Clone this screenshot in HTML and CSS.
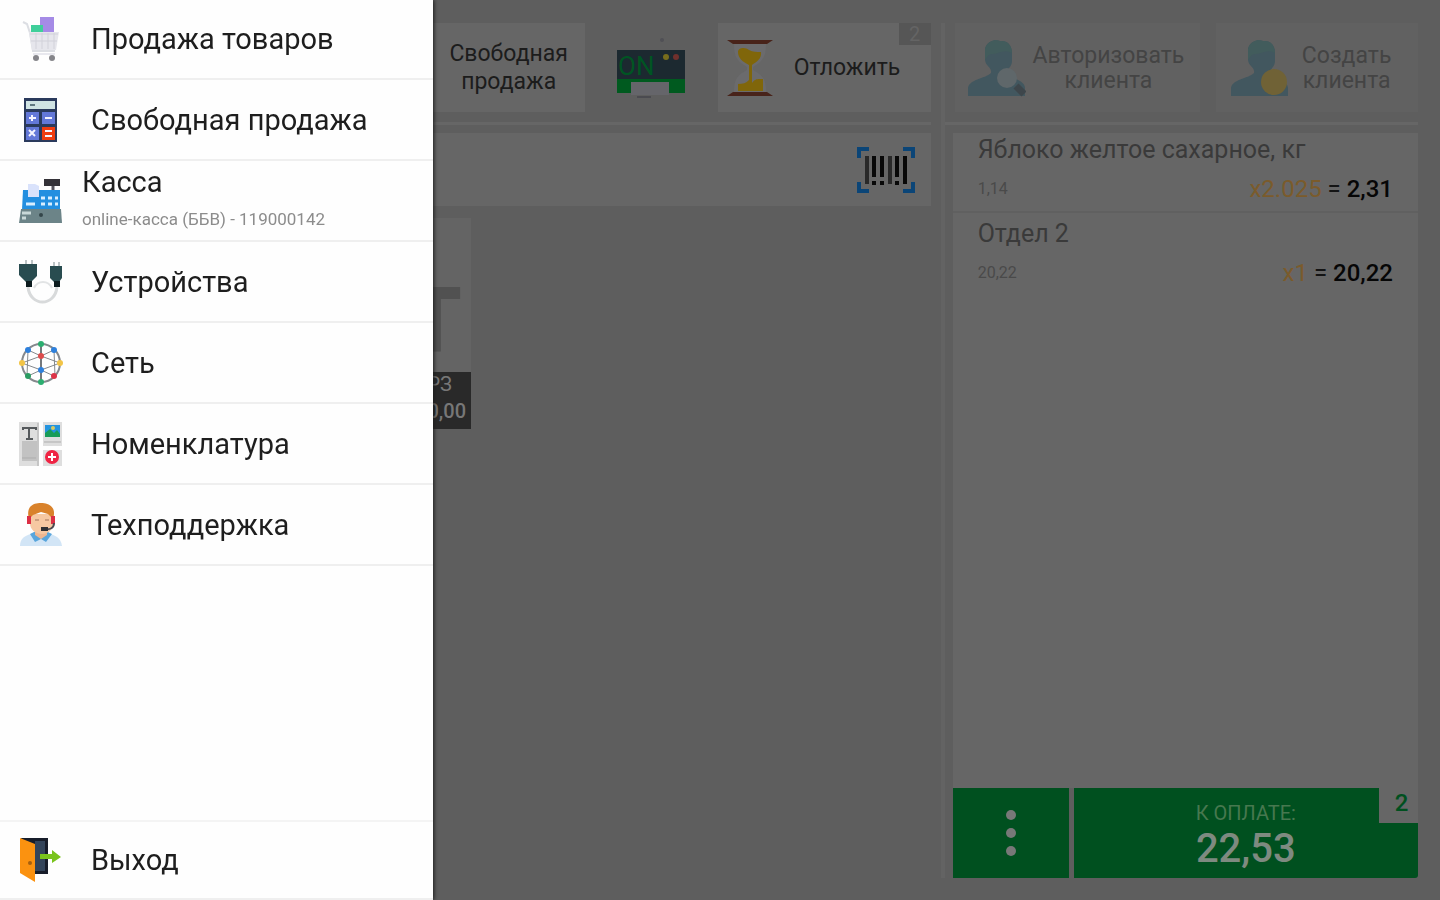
FILE: index.html
```html
<!DOCTYPE html>
<html lang="ru">
<head>
<meta charset="utf-8">
<title>Касса</title>
<link rel="stylesheet" href="styles.css">
</head>
<body>
<main class="app">
  <section class="sale">
    <div class="toolbar">
      <button class="tool tool-free">Свободная<br>продажа</button>
      <button class="tool-printer" aria-label="Принтер">
        <svg width="70" height="62" viewBox="0 0 70 62">
          <circle cx="46" cy="3" r="2" fill="#505055"/>
          <path d="M1 13h68v30H1z" fill="#1c2930"/>
          <path d="M1 42h68v14H1z" fill="#005a1f"/>
          <path d="M15 45h38v13H15z" fill="#65656a"/>
          <path d="M21 60h14" stroke="#4b4b50" stroke-width="2"/>
          <circle cx="50" cy="20" r="3" fill="#776d1c"/><circle cx="60" cy="20" r="3" fill="#70302c"/>
          <text x="2" y="38" class="printer-on">ON</text>
        </svg>
      </button>
      <button class="tool tool-hold">
        <svg width="48" height="58" viewBox="0 0 48 58">
          <path d="M8 5h32c0 13-3 17-13 23v3c10 5 13 10 13 22H8c0-12 3-17 13-22v-3C11 22 8 18 8 5z" fill="#6b6b6d"/>
          <path d="M12 13c0-5 8-5 11-2 4 2 8 2 12 2 1 7-5 10-9 13v18c3-5 7-4 11-4v12H12v-7c5 0 8-1 11-4V26c-6-3-11-7-11-13z" fill="#80660a"/>
          <path d="M1 1h46l-6 4H7zM7 53h34l6 4H1z" fill="#48231a"/>
        </svg>
        <span>Отложить</span>
        <span class="hold-count">2</span>
      </button>
    </div>
    <div class="search">
      <input class="search-input" type="text" aria-label="Поиск товара">
      <button class="scan" aria-label="Сканировать">
        <svg width="58" height="46" viewBox="0 0 58 46">
          <path d="M2 11V2h10M46 2h10v9M2 35v9h10M46 44h10v-9" fill="none" stroke="#0b4577" stroke-width="4"/>
          <path d="M10 9v28M33 9v28" stroke="#292929" stroke-width="4"/>
          <path d="M17 9v21M25 9v21M40 9v21M17 34v4M25 34v4M40 34v4M48 9v28" stroke="#080808" stroke-width="4"/>
        </svg>
      </button>
    </div>
    <div class="products">
      <button class="product">
        <span class="product-pic">T</span>
        <span class="product-label"><span>РЗ</span><span class="product-price">0,00</span></span>
      </button>
    </div>
  </section>

  <section class="order">
    <div class="clients">
      <button class="client client-wide">
        <svg width="58" height="58" viewBox="0 0 58 58">
          <path d="M17 10C19 2 27 0 32 2c8-1 12 5 12 12v8c0 5-4 8-6 11 1 6 19 7 19 16v8H0v-7c0-10 17-10 23-16 1-6-5-6-6-13z" fill="#42575f"/>
          <path d="M17 10C19 2 27 0 32 2c8-1 12 5 12 12-9-5-15 2-20 1-4 0-5 4-7 6z" fill="#425c5c"/>
          <circle cx="39" cy="39" r="10" fill="#5f676a"/>
          <path d="M48 47l8 8" stroke="#3e464b" stroke-width="7"/>
        </svg>
        <span>Авторизовать<br>клиента</span>
      </button>
      <button class="client client-new">
        <svg width="58" height="58" viewBox="0 0 58 58">
          <path d="M17 10C19 2 27 0 32 2c8-1 12 5 12 12v8c0 5-4 8-6 11 1 6 19 7 19 16v8H0v-7c0-10 17-10 23-16 1-6-5-6-6-13z" fill="#42575f"/>
          <path d="M17 10C19 2 27 0 32 2c8-1 12 5 12 12-9-5-15 2-20 1-4 0-5 4-7 6z" fill="#425c5c"/>
          <circle cx="43" cy="43" r="13" fill="#706236"/>
        </svg>
        <span>Создать<br>клиента</span>
      </button>
    </div>
    <ul class="lines">
      <li class="line">
        <div class="line-name">Яблоко желтое сахарное, кг</div>
        <div class="line-row"><span class="line-price">1,14</span><span class="line-total"><span class="line-qty">x2.025</span> = <b>2,31</b></span></div>
      </li>
      <li class="line">
        <div class="line-name">Отдел 2</div>
        <div class="line-row"><span class="line-price">20,22</span><span class="line-total"><span class="line-qty">x1</span> = <b>20,22</b></span></div>
      </li>
    </ul>
    <div class="actions">
      <button class="more" aria-label="Ещё">
        <svg width="10" height="48" viewBox="0 0 10 48" fill="#787878"><circle cx="5" cy="6" r="5"/><circle cx="5" cy="24" r="5"/><circle cx="5" cy="42" r="5"/></svg>
      </button>
      <button class="pay">
        <span class="pay-caption">К ОПЛАТЕ:</span>
        <span class="pay-sum">22,53</span>
        <span class="pay-count">2</span>
      </button>
    </div>
  </section>
</main>

<nav class="drawer">
  <ul class="menu">
    <li><a class="item" href="#">
      <svg class="icon" viewBox="0 0 44 44">
        <path d="M21 0h14v17H21z" fill="#a58be6"/><path d="M12 8h12v8H12z" fill="#3fcf9a"/>
        <path d="M4 5l4 2 3 9 3 18h22" fill="none" stroke="#dcdee3" stroke-width="2"/>
        <path d="M10 15h30l-3 18H13z" fill="#e6e6ec"/>
        <path d="M11 17h28M12 24h26M17 16v16M23 16v16M29 16v16M35 16v16" stroke="#d2d2da"/>
        <path d="M14 37h22" stroke="#e8e8ee" stroke-width="2"/>
        <circle cx="17" cy="41" r="3" fill="#85858a"/><circle cx="33" cy="41" r="3" fill="#85858a"/>
      </svg>Продажа товаров</a></li>
    <li><a class="item" href="#">
      <svg class="icon" viewBox="0 0 44 44">
        <path d="M5 0h33v44H5z" fill="#2a3a5c"/><path d="M7 3h29v8H7z" fill="#cfe3e3"/><path d="M11 7h5" stroke="#607880" stroke-width="2"/>
        <path d="M7 14h13v12H7zM23 14h13v12H23zM7 29h13v13H7z" fill="#6378d8"/><path d="M23 29h13v13H23z" fill="#f03c10"/>
        <path d="M10 20h7M13 17v6M26 20h7M10 32l6 6M16 32l-6 6M26 33h7M26 38h7" stroke="#f4f4ff" stroke-width="2"/>
      </svg>Свободная продажа</a></li>
    <li><a class="item item-double" href="#">
      <svg class="icon" viewBox="0 0 44 44">
        <path d="M25 0h16v7H25z" fill="#343238"/><path d="M34 7v6" stroke="#55535c" stroke-width="3"/>
        <path d="M4 11h37v20H3z" fill="#238fe0"/><path d="M9 5h7l4 2v11H9z" fill="#d9e2fb"/>
        <path d="M22 19h4M29 19h4M36 19h3M7 25h9M22 25h4M29 25h4M36 25h3" stroke="#d8eeff" stroke-width="3"/>
        <path d="M2 30h40l1 14H0z" fill="#6c8488"/><path d="M3 34h9M3 39h4" stroke="#c8d8d8" stroke-width="3"/><circle cx="22" cy="36" r="2" fill="#34464a"/>
      </svg>
      <span class="item-text">Касса<small>online-касса (ББВ) - 119000142</small></span></a></li>
    <li><a class="item" href="#">
      <svg class="icon" viewBox="0 0 44 44">
        <path d="M9 27c2 20 27 20 29 0" fill="none" stroke="#d8dadb" stroke-width="3"/><path d="M15 28c4-8 14-8 18 0" fill="none" stroke="#e2e4e5" stroke-width="2"/>
        <path d="M7 0v6M13 0v6M35 2v6M40 2v6" stroke="#bcc3c5" stroke-width="2"/>
        <path d="M0 4h18v12l-6 6H7l-7-7zM31 6h12v12l-3 4h-5l-4-4z" fill="#294c50"/><path d="M7 21h6v6H7zM35 21h6v6h-6z" fill="#0c1b1e"/>
      </svg>Устройства</a></li>
    <li><a class="item" href="#">
      <svg class="icon" viewBox="0 0 44 44">
        <circle cx="22" cy="22" r="19" fill="none" stroke="#85898d" stroke-width="2"/>
        <path d="M22 3v38M3 22l19-7 19 7-19 7zM9 9l13 6 13-6M9 35l13-6 13 6M9 9l-1 26M35 9l1 26" fill="none" stroke="#85898d" stroke-width="1"/>
        <path d="M22 3v38" stroke="#74787c" stroke-width="2"/>
        <circle cx="22" cy="3" r="3" fill="#2cae70"/><circle cx="22" cy="41" r="3" fill="#2cae70"/><circle cx="9" cy="35" r="3" fill="#2a9c62"/>
        <circle cx="9" cy="9" r="3" fill="#2e80dc"/><circle cx="35" cy="9" r="3" fill="#2e80dc"/><circle cx="22" cy="29" r="3" fill="#2e80dc"/>
        <circle cx="3" cy="22" r="3" fill="#f2c446"/><circle cx="41" cy="22" r="3" fill="#f2c446"/>
        <circle cx="22" cy="15" r="3" fill="#dd4c4c"/><circle cx="35" cy="35" r="3" fill="#dc3448"/>
      </svg>Сеть</a></li>
    <li><a class="item" href="#">
      <svg class="icon" viewBox="0 0 44 44">
        <path d="M0 0h20v44H0zM24 0h19v24H24zM24 28h19v16H24z" fill="#dedede"/><path d="M3 19h15v20H3z" fill="#c2c2c2"/><path d="M19 1v43M3 36h14M25 20h17" stroke="#adadad"/>
        <path d="M4 8V6h13v2M10 6v11M7 17h7" fill="none" stroke="#55595c" stroke-width="2"/>
        <path d="M26 3h15v12H26z" fill="#2494df"/><path d="M26 15v-4l5-4 4 4 3-3 3 4v3z" fill="#189c58"/><circle cx="34" cy="6" r="2" fill="#d8ca60"/>
        <circle cx="33" cy="35" r="7" fill="#ef2444"/><path d="M29 35h8M33 31v8" stroke="#fff" stroke-width="2"/>
      </svg>Номенклатура</a></li>
    <li><a class="item" href="#">
      <svg class="icon" viewBox="0 0 44 44">
        <path d="M1 43c0-8 5-11 15-13h11c10 2 15 5 16 13z" fill="#d2e5f6"/><path d="M11 31l6-3h10l6 3-6 8-5-3-6 3z" fill="#5aa6dc"/>
        <path d="M16 24h12v8l-6 4-6-4z" fill="#efb791"/>
        <path d="M11 11h23v9c0 7-5 11-11 11S11 27 11 20z" fill="#f6c8a2"/>
        <path d="M10 16C7 4 13 0 22 0s16 5 12 16l-5-5-7-2-8 3z" fill="#d9822b"/>
        <path d="M8 13h4v8H8zM32 13h4v8h-4z" fill="#dc2f45"/><path d="M35 20c0 5-4 7-9 6" fill="none" stroke="#4c4a50" stroke-width="2"/><path d="M22 24h7v4h-7z" fill="#2f3034"/>
        <path d="M16 17h4M26 17h4" stroke="#a2755c"/>
      </svg>Техподдержка</a></li>
  </ul>
  <a class="item item-exit" href="#">
    <svg class="icon" viewBox="0 0 44 44">
      <path d="M2 0h27v36H14z" fill="#171d2a"/><path d="M16 3h10v30H16z" fill="#33445a"/>
      <path d="M1 0l15 6v38L1 35z" fill="#fb9210"/><circle cx="11" cy="25" r="2" fill="#a56010"/>
      <path d="M21 16h12v-4l9 7-9 6v-4H21z" fill="#79c41c"/>
    </svg>Выход</a>
</nav>
</body>
</html>
```
FILE: styles.css
```css
* { box-sizing: border-box; }
body {
  margin: 0;
  background: #5e5e5e;
  color: #1c1c1c;
  font-family: Roboto, "Noto Sans", sans-serif;
}
button, input {
  border: 0;
  padding: 0;
  background: none;
  color: inherit;
  font-family: inherit;
}
ul { list-style: none; margin: 0; padding: 0; }
svg { flex: none; display: block; }

.app {
  display: grid;
  grid-template-columns: 2fr 1fr;
  column-gap: 22px;
  min-height: 100vh;
  padding: 23px 22px 22px 0;
}
.sale, .order { display: flex; flex-direction: column; min-width: 0; }
.sale { position: relative; }
.sale::after {
  content: "";
  position: absolute;
  top: 0;
  bottom: 0;
  right: -14px;
  width: 4px;
  background: #636363;
}

.toolbar, .clients {
  display: flex;
  height: 102px;
  padding-bottom: 12px;
  border-bottom: 3px solid #666;
  margin-bottom: 8px;
}
.toolbar { justify-content: flex-end; }
.clients { gap: 16px; margin-left: -10px; padding-left: 12px; }
.tool { background: #666; font-size: 23px; line-height: 28px; height: 89px; }
.tool-free { width: 152px; }
.tool-printer { width: 133px; height: 89px; display: flex; justify-content: center; align-items: center; }
.printer-on { font: 26px Roboto, sans-serif; fill: #005523; }
.tool-hold {
  position: relative;
  width: 213px;
  display: flex;
  align-items: center;
  gap: 20px;
  padding-left: 8px;
}
.hold-count {
  position: absolute;
  top: 0;
  right: 0;
  width: 32px;
  height: 22px;
  background: #565656;
  color: #646464;
  font-size: 20px;
  line-height: 22px;
}

.search {
  display: flex;
  align-items: center;
  height: 73px;
  padding-right: 16px;
  background: #666;
}
.search-input { flex: 1; height: 100%; font-size: 24px; }

.products { margin-top: 12px; padding-left: 318px; }
.product { width: 153px; background: #646464; display: block; }
.product-pic {
  display: block;
  height: 154px;
  padding-top: 60px;
  padding-left: 78px;
  font-size: 90px;
  line-height: 88px;
  font-weight: 900;
  color: #515151;
}
.product-label {
  display: flex;
  flex-direction: column;
  height: 57px;
  padding-right: 5px;
  background: #292929;
  color: #777;
  font-size: 20px;
  line-height: 28px;
  text-align: right;
}
.product-label span:first-child { padding-right: 14px; line-height: 25px; }
.product-price { font-weight: 500; }

.client {
  flex: 1;
  display: flex;
  align-items: center;
  justify-content: center;
  gap: 7px;
  height: 89px;
  background: #616161;
  color: #444;
  font-size: 23px;
  line-height: 25px;
}
.client-wide { flex: none; width: 53%; padding-right: 3px; }
.client-new { gap: 13px; padding-right: 12px; }

.lines { flex: 1; background: #666; }
.line { padding: 0 25px; height: 82px; }
.line:first-child { height: 80px; border-bottom: 2px solid #606060; }
.line-name { padding-top: 1px; font-size: 25px; line-height: 32px; color: #3a3a3a; }
.line:nth-child(2) .line-name { padding-top: 5px; }
.line-row { display: flex; justify-content: space-between; align-items: center; padding-top: 7px; line-height: 32px; }
.line-price { font-size: 16px; color: #4a4a4a; }
.line-total { font-size: 24px; color: #141414; }
.line-total b { font-weight: 500; color: #060606; }
.line-qty { color: #7b5b2b; }

.actions { display: flex; gap: 5px; height: 90px; }
.more, .pay { background: #00501f; }
.more { width: 116px; display: flex; align-items: center; justify-content: center; }
.pay {
  position: relative;
  flex: 1;
  display: flex;
  flex-direction: column;
  align-items: center;
  justify-content: center;
  border-radius: 0 0 3px 0;
  color: #7e8a80;
}
.pay-caption { font-size: 20px; line-height: 32px; color: #47784f; }
.pay-sum { font-size: 40px; line-height: 40px; font-weight: 500; }
.pay-count {
  position: absolute;
  top: 0;
  right: 0;
  width: 39px;
  height: 35px;
  padding-left: 6px;
  background: #666;
  color: #00501f;
  font-size: 24px;
  line-height: 30px;
  font-weight: 500;
}

.drawer {
  position: fixed;
  top: 0;
  bottom: 0;
  left: 0;
  width: 433px;
  display: flex;
  flex-direction: column;
  justify-content: space-between;
  background: #fefefe;
  box-shadow: 1px 0 4px #1c1c1c;
}
.item {
  display: flex;
  align-items: center;
  gap: 28px;
  height: 81px;
  padding: 0 19px;
  border-bottom: 2px solid #efefef;
  color: #1e1e1e;
  font-size: 29px;
  line-height: 34px;
  text-decoration: none;
}
li:first-child .item { height: 80px; }
.icon { width: 44px; height: 44px; }
.item-double { gap: 19px; }
.item-text { display: flex; flex-direction: column; padding-bottom: 6px; }
.item-text small { font-size: 17px; line-height: 24px; padding-top: 8px; color: #8c8c8c; }
.item-exit { height: 80px; border-top: 2px solid #f4f4f4; }
```
